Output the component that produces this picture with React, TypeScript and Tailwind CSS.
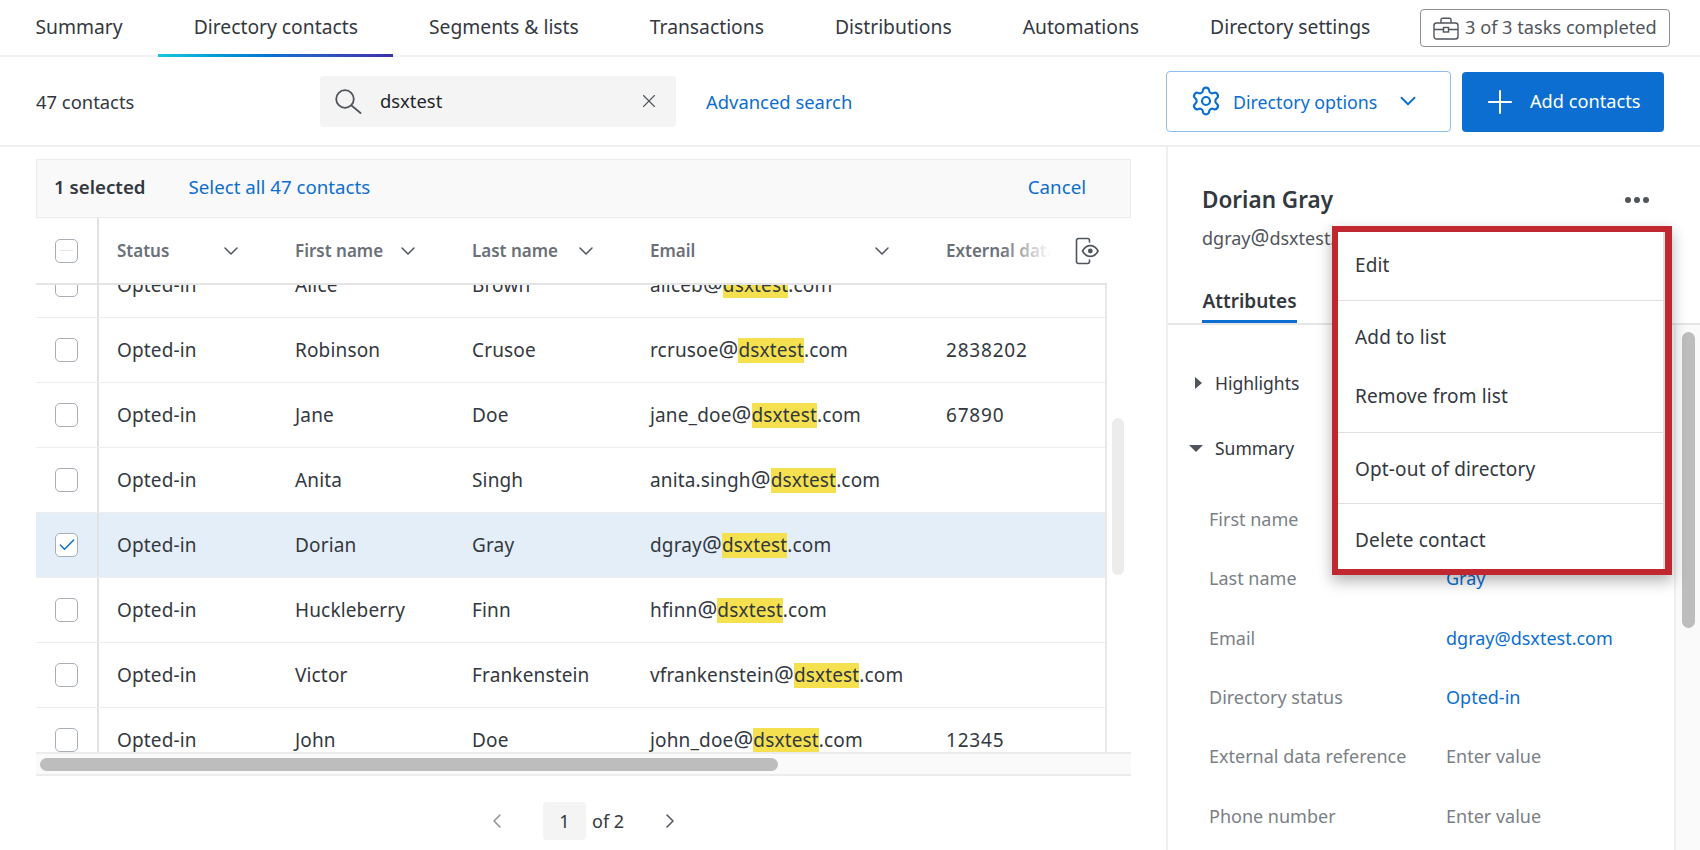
import React from "react";
import { ChevronDown, ChevronLeft, ChevronRight, Check, Plus, Settings, X } from "lucide-react";

const tabs = ["Summary", "Directory contacts", "Segments & lists", "Transactions", "Distributions", "Automations", "Directory settings"];

const contacts = [
  { first: "Alice", last: "Brown", user: "aliceb", ext: "" },
  { first: "Robinson", last: "Crusoe", user: "rcrusoe", ext: "2838202" },
  { first: "Jane", last: "Doe", user: "jane_doe", ext: "67890" },
  { first: "Anita", last: "Singh", user: "anita.singh", ext: "" },
  { first: "Dorian", last: "Gray", user: "dgray", ext: "", selected: true },
  { first: "Huckleberry", last: "Finn", user: "hfinn", ext: "" },
  { first: "Victor", last: "Frankenstein", user: "vfrankenstein", ext: "" },
  { first: "John", last: "Doe", user: "john_doe", ext: "12345" },
];

const attributes = [
  { label: "First name", value: "Dorian", link: true },
  { label: "Last name", value: "Gray", link: true },
  { label: "Email", value: "dgray@dsxtest.com", link: true },
  { label: "Directory status", value: "Opted-in", link: true },
  { label: "External data reference", value: "Enter value", link: false },
  { label: "Phone number", value: "Enter value", link: false },
];

function BriefcaseIcon() {
  return (
    <svg width="26" height="23" viewBox="0 0 26 23" fill="none" stroke="#50555c" strokeWidth="1.4">
      <rect x="1" y="6" width="24" height="16" rx="2.5" />
      <path d="M8 6V2.8A1.5 1.5 0 0 1 9.5 1.3h7A1.5 1.5 0 0 1 18 2.8V6" />
      <path d="M1 12.5h9.5M15.5 12.5H25" />
      <rect x="10.5" y="10.5" width="5" height="4.5" />
    </svg>
  );
}

function ColumnsIcon() {
  return (
    <svg width="24" height="28" viewBox="0 0 24 28" fill="none" stroke="#50555c" strokeWidth="1.6">
      <path d="M14.5 5V3.5a2 2 0 0 0-2-2H3.5a2 2 0 0 0-2 2v21a2 2 0 0 0 2 2h9a2 2 0 0 0 2-2V23" strokeLinecap="round" />
      <path d="M7.5 14c2-3.6 4.6-5.4 7.8-5.4s5.8 1.8 7.8 5.4c-2 3.6-4.6 5.4-7.8 5.4s-5.8-1.8-7.8-5.4z" />
      <circle cx="15.3" cy="14" r="2.4" fill="#50555c" stroke="none" />
    </svg>
  );
}

function SearchIcon() {
  return (
    <svg width="27" height="25" viewBox="0 0 27 25" fill="none" stroke="#50555c" strokeWidth="1.8" strokeLinecap="round">
      <circle cx="10" cy="10" r="8.8" />
      <path d="M16.5 16.5L25.5 24" />
    </svg>
  );
}

function Checkbox({ checked, dash }: { checked?: boolean; dash?: boolean }) {
  return (
    <div className="relative flex h-[24px] w-[23px] items-center justify-center rounded-[5px] border border-[#a9aeb6] bg-white">
      {checked && <Check size={20} strokeWidth={1.75} className="text-[#0b6ed0]" />}
      {dash && <div className="h-px w-[13px] bg-[#e4e4e4]" />}
    </div>
  );
}

function HeaderCell({ label, className }: { label: string; className: string }) {
  return (
    <div className={`flex items-center justify-between pr-[52px] ${className}`}>
      <span>{label}</span>
      <ChevronDown size={24} strokeWidth={1.5} className="text-[#50555c]" />
    </div>
  );
}

function Email({ user }: { user: string }) {
  return (
    <span>
      {user}
      <span className="text-[22px] leading-none">@</span>
      <span className="inline-block h-[25px] bg-[#f5e14f] leading-[25px]">dsxtest</span>.com
    </span>
  );
}

function TableRow({ row, index }: { row: (typeof contacts)[number]; index: number }) {
  return (
    <div
      className={`flex h-[65px] shrink-0 items-center border-b border-[#eeeeee] text-[19px] leading-[25px] tracking-[0.15px] text-[#33383f] ${
        row.selected ? "bg-[#e3eef9]" : "bg-white"
      } ${index === 0 ? "mt-[-32px]" : ""}`}
    >
      <div className="flex h-full w-[63px] shrink-0 items-center border-r-2 border-[#e2e2e2] pl-[19px]">
        <Checkbox checked={row.selected} />
      </div>
      <div className="w-[196px] shrink-0 pl-[18px]">Opted-in</div>
      <div className="w-[177px] shrink-0">{row.first}</div>
      <div className="w-[178px] shrink-0">{row.last}</div>
      <div className="w-[296px] shrink-0">
        <Email user={row.user} />
      </div>
      <div className="tracking-[0.8px]">{row.ext}</div>
    </div>
  );
}

function ActionMenu() {
  return (
    <div className="absolute left-[1332px] top-[226px] flex h-[349px] w-[340px] flex-col border-[6px] border-r-[7px] border-[#c1272f] bg-white text-[19px] tracking-[0.15px] text-[#33383f] shadow-[0_6px_14px_rgba(0,0,0,0.3)]">
      <div className="flex h-[69px] items-center border-b border-r-2 border-[#dfdfdf] pb-[2px] pl-[17px]">Edit</div>
      <div className="flex h-[132px] flex-col justify-center border-b border-r-2 border-[#dfdfdf] pl-[17px]">
        <div className="flex h-[60px] items-center pt-[2px]">Add to list</div>
        <div className="flex h-[60px] items-center">Remove from list</div>
      </div>
      <div className="flex h-[71px] items-center border-b border-r-2 border-[#dfdfdf] pl-[17px] pt-[2px]">Opt-out of directory</div>
      <div className="flex flex-1 items-center border-r-2 border-[#dfdfdf] pl-[17px] pt-[8px]">Delete contact</div>
    </div>
  );
}

export default function App() {
  return (
    <div className="relative h-[850px] w-[1700px] overflow-hidden bg-white font-['Noto_Sans',sans-serif] text-[#33383f]">
      {/* top tabs */}
      <div className="flex h-[57px] items-start border-b-2 border-[#f2f2f2]">
        {tabs.map((tab) => (
          <div key={tab} className="relative flex h-[57px] items-center whitespace-nowrap px-[35.5px] pb-[2px] text-[19.3px]">
            {tab}
            {tab === "Directory contacts" && (
              <div className="absolute inset-x-0 bottom-0 h-[3px] bg-gradient-to-r from-[#1cc8d8] via-[#0b6ed0] to-[#3b2fa8]" />
            )}
          </div>
        ))}
        <div className="ml-auto mr-[30px] mt-[9px] flex h-[38px] w-[250px] shrink-0 items-center gap-[6px] whitespace-nowrap rounded-[4px] border border-[#8d9299] pl-[12px] text-[18.2px] text-[#50555c]">
          <BriefcaseIcon />
          <span>3 of 3 tasks completed</span>
        </div>
      </div>

      {/* toolbar */}
      <div className="flex h-[90px] items-center border-b-2 border-[#efefef] text-[18.4px]">
        <div className="w-[320px] pl-[36px] pt-[2px]">47 contacts</div>
        <div className="flex h-[51px] w-[356px] items-center rounded-[4px] bg-[#f4f4f4] pl-[15px]">
          <SearchIcon />
          <span className="ml-[18px] flex-1 text-[#22262b]">dsxtest</span>
          <X size={22} strokeWidth={1.25} className="mr-[16px] text-[#50555c]" />
        </div>
        <div className="ml-[30px] pt-[2px] text-[#0b6ed0]">Advanced search</div>
        <div className="ml-auto flex h-[61px] w-[285px] items-center rounded-[4px] border border-[#8fbdec] pl-[23px] text-[17.8px] text-[#0b6ed0]">
          <Settings size={32} strokeWidth={1.6} />
          <span className="ml-[11px] pt-[2px]">Directory options</span>
          <ChevronDown size={26} strokeWidth={1.75} className="ml-[18px]" />
        </div>
        <div className="ml-[11px] mr-[36px] mt-[2px] flex h-[60px] w-[202px] items-center rounded-[4px] bg-[#0b6ed0] pl-[19px] text-[18.2px] text-white">
          <Plus size={38} strokeWidth={1.25} />
          <span className="ml-[11px]">Add contacts</span>
        </div>
      </div>

      <div className="flex h-[703px]">
        {/* contacts table */}
        <div className="flex w-[1166px] shrink-0 flex-col pl-[36px] pt-[12px]">
          <div className="flex h-[59px] w-[1095px] items-center border border-[#ececec] bg-[#f9f9f9] pb-[2px] pl-[17px] pr-[44px] text-[18.7px]">
            <span className="font-semibold">1 selected</span>
            <span className="ml-[43px] text-[#0b6ed0]">Select all 47 contacts</span>
            <span className="ml-auto text-[#0b6ed0]">Cancel</span>
          </div>
          <div className="flex h-[67px] w-[1071px] items-center border-b-2 border-[#e4e4e4] text-[17px] font-semibold text-[#6b7078]">
            <div className="flex h-full w-[63px] shrink-0 items-center border-r-2 border-[#e2e2e2] pl-[19px]">
              <Checkbox dash />
            </div>
            <HeaderCell label="Status" className="w-[196px] shrink-0 pl-[18px]" />
            <HeaderCell label="First name" className="w-[177px] shrink-0" />
            <HeaderCell label="Last name" className="w-[178px] shrink-0" />
            <HeaderCell label="Email" className="w-[296px] shrink-0" />
            <div className="relative w-[105px] shrink-0 overflow-hidden whitespace-nowrap">
              External data reference
              <div className="absolute inset-y-0 right-0 w-[50px] bg-gradient-to-r from-transparent to-white" />
            </div>
            <div className="ml-[24px]">
              <ColumnsIcon />
            </div>
          </div>
          <div className="flex h-[467px] w-[1095px]">
            <div className="flex h-full w-[1071px] shrink-0 flex-col overflow-hidden border-r-2 border-[#e8e8e8]">
              {contacts.map((row, i) => (
                <TableRow key={row.user} row={row} index={i} />
              ))}
            </div>
            <div className="ml-[5px] mt-[133px] h-[157px] w-[12px] rounded-full bg-[#ececec]" />
          </div>
          <div className="flex h-[24px] w-[1095px] items-center border-y-2 border-[#ececec] bg-[#fafafa] pl-[4px]">
            <div className="h-[13px] w-[738px] rounded-full bg-[#bdbdbd]" />
          </div>
          <div className="ml-[449px] mt-[26px] flex h-[38px] items-center text-[18px]">
            <ChevronLeft size={24} strokeWidth={1.5} className="text-[#8d9299]" />
            <div className="ml-[34px] flex h-[38px] w-[43px] items-center justify-center rounded-[4px] bg-[#f4f4f4]">1</div>
            <span className="ml-[6px]">of 2</span>
            <ChevronRight size={24} strokeWidth={1.5} className="ml-[34px] text-[#50555c]" />
          </div>
        </div>

        {/* contact panel */}
        <div className="flex flex-1 flex-col border-l-2 border-[#efefef]">
          <div className="flex h-[178px] shrink-0 flex-col border-b-2 border-[#e6e6e6] pl-[34px]">
            <div className="mt-[36px] flex items-center justify-between pr-[51px]">
              <span className="text-[22.5px] font-semibold leading-[34px]">Dorian Gray</span>
              <span className="flex gap-[3px]">
                <i className="h-[6px] w-[6px] rounded-full bg-[#50555c]" />
                <i className="h-[6px] w-[6px] rounded-full bg-[#50555c]" />
                <i className="h-[6px] w-[6px] rounded-full bg-[#50555c]" />
              </span>
            </div>
            <div className="mt-[9px] text-[18px] leading-[24px] text-[#50555c]">
              dgray<span className="text-[21px] leading-none">@</span>dsxtest.com
            </div>
            <div className="mt-[36px] flex h-[39px] w-[95px] items-start justify-center whitespace-nowrap border-b-[3px] border-[#0b6ed0] pt-[1px] text-[19px] font-semibold leading-[28px]">
              Attributes
            </div>
          </div>
          <div className="flex flex-1">
            <div className="flex-1 border-r-2 border-[#efefef] pl-[20px] pt-[44px] text-[18px]">
              <div className="flex h-[28px] items-center text-[#33383f]">
                <div className="ml-[7px] h-0 w-0 border-y-[6px] border-l-[7px] border-y-transparent border-l-[#50555c]" />
                <span className="ml-[13px] text-[17.5px]">Highlights</span>
              </div>
              <div className="mt-[37px] flex h-[28px] items-center text-[#33383f]">
                <div className="ml-[1px] h-0 w-0 border-x-[7px] border-t-[7px] border-x-transparent border-t-[#50555c]" />
                <span className="ml-[12px] text-[17.5px]">Summary</span>
              </div>
              <div className="mt-[28px] flex flex-col pl-[21px]">
                {attributes.map((attr) => (
                  <div key={attr.label} className="flex h-[59.3px] items-center">
                    <span className="w-[237px] text-[#7a7f86]">{attr.label}</span>
                    <span className={attr.link ? "text-[#0b6ed0]" : "text-[#7a7f86]"}>{attr.value}</span>
                  </div>
                ))}
              </div>
            </div>
            <div className="w-[24px] bg-[#fafafa] pl-[6px] pt-[7px]">
              <div className="h-[296px] w-[13px] rounded-full bg-[#bdbdbd]" />
            </div>
          </div>
        </div>
      </div>

      <ActionMenu />
    </div>
  );
}
